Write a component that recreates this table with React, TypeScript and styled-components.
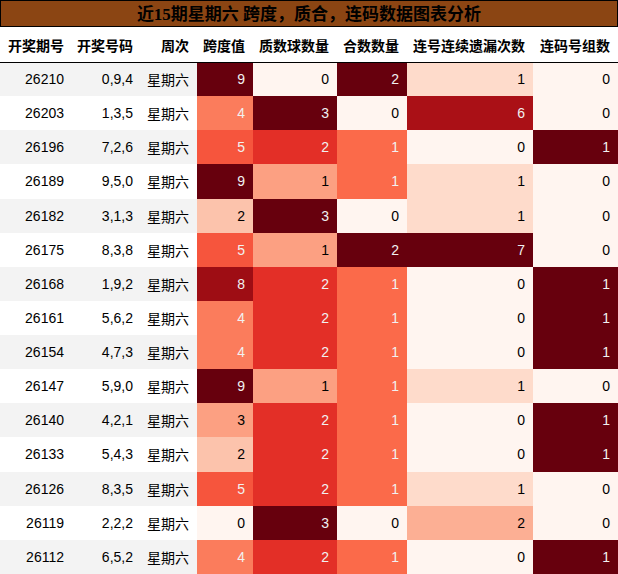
import styled, { createGlobalStyle } from 'styled-components';

const GlobalStyle = createGlobalStyle`
  body {
    margin: 0;
    background: #fff;
  }
`;

// matplotlib "Reds" colormap stops
const REDS = [
  [255, 245, 240],
  [254, 224, 210],
  [252, 187, 161],
  [252, 146, 114],
  [251, 106, 74],
  [239, 59, 44],
  [203, 24, 29],
  [165, 15, 21],
  [103, 0, 13],
];

const reds = (t: number) => {
  const pos = Math.min(Math.max(t, 0), 1) * (REDS.length - 1);
  const i = Math.min(Math.floor(pos), REDS.length - 2);
  const f = pos - i;
  return REDS[i].map((c, k) => Math.round(c + (REDS[i + 1][k] - c) * f));
};

const luminance = (rgb: number[]) => {
  const lin = rgb.map((v) => {
    const c = v / 255;
    return c <= 0.03928 ? c / 12.92 : Math.pow((c + 0.055) / 1.055, 2.4);
  });
  return 0.2126 * lin[0] + 0.7152 * lin[1] + 0.0722 * lin[2];
};

type Row = {
  issue: string;
  nums: string;
  span: number;
  prime: number;
  composite: number;
  miss: number;
  groups: number;
};

const rows: Row[] = [
  { issue: '26210', nums: '0,9,4', span: 9, prime: 0, composite: 2, miss: 1, groups: 0 },
  { issue: '26203', nums: '1,3,5', span: 4, prime: 3, composite: 0, miss: 6, groups: 0 },
  { issue: '26196', nums: '7,2,6', span: 5, prime: 2, composite: 1, miss: 0, groups: 1 },
  { issue: '26189', nums: '9,5,0', span: 9, prime: 1, composite: 1, miss: 1, groups: 0 },
  { issue: '26182', nums: '3,1,3', span: 2, prime: 3, composite: 0, miss: 1, groups: 0 },
  { issue: '26175', nums: '8,3,8', span: 5, prime: 1, composite: 2, miss: 7, groups: 0 },
  { issue: '26168', nums: '1,9,2', span: 8, prime: 2, composite: 1, miss: 0, groups: 1 },
  { issue: '26161', nums: '5,6,2', span: 4, prime: 2, composite: 1, miss: 0, groups: 1 },
  { issue: '26154', nums: '4,7,3', span: 4, prime: 2, composite: 1, miss: 0, groups: 1 },
  { issue: '26147', nums: '5,9,0', span: 9, prime: 1, composite: 1, miss: 1, groups: 0 },
  { issue: '26140', nums: '4,2,1', span: 3, prime: 2, composite: 1, miss: 0, groups: 1 },
  { issue: '26133', nums: '5,4,3', span: 2, prime: 2, composite: 1, miss: 0, groups: 1 },
  { issue: '26126', nums: '8,3,5', span: 5, prime: 2, composite: 1, miss: 1, groups: 0 },
  { issue: '26119', nums: '2,2,2', span: 0, prime: 3, composite: 0, miss: 2, groups: 0 },
  { issue: '26112', nums: '6,5,2', span: 4, prime: 2, composite: 1, miss: 0, groups: 1 },
];

const heatKeys: (keyof Row)[] = ['span', 'prime', 'composite', 'miss', 'groups'];

const columns = [
  { label: '开奖期号', width: 72 },
  { label: '开奖号码', width: 69 },
  { label: '周次', width: 56 },
  { label: '跨度值', width: 56 },
  { label: '质数球数量', width: 84 },
  { label: '合数数量', width: 70 },
  { label: '连号连续遗漏次数', width: 126 },
  { label: '连码号组数', width: 85 },
];

const ranges = heatKeys.map((key) => {
  const values = rows.map((r) => r[key] as number);
  return { min: Math.min(...values), max: Math.max(...values) };
});

const HeatValue = ({ value, col }: { value: number; col: number }) => {
  const { min, max } = ranges[col];
  const rgb = reds(max === min ? 0 : (value - min) / (max - min));
  const dark = luminance(rgb) < 0.408;
  return (
    <HeatCell $bg={`rgb(${rgb.join(',')})`} $dark={dark}>
      {value}
    </HeatCell>
  );
};

const App = () => {
  return (
    <Wrap>
      <GlobalStyle />
      <Title>近15期星期六 跨度，质合，连码数据图表分析</Title>
      <Table>
        <colgroup>
          {columns.map((c) => (
            <col key={c.label} style={{ width: c.width }} />
          ))}
        </colgroup>
        <thead>
          <tr>
            {columns.map((c) => (
              <HeadCell key={c.label}>{c.label}</HeadCell>
            ))}
          </tr>
        </thead>
        <tbody>
          {rows.map((row) => (
            <BodyRow key={row.issue}>
              <Cell>{row.issue}</Cell>
              <Cell>{row.nums}</Cell>
              <Cell>星期六</Cell>
              {heatKeys.map((key, i) => (
                <HeatValue key={key} value={row[key] as number} col={i} />
              ))}
            </BodyRow>
          ))}
        </tbody>
      </Table>
    </Wrap>
  );
};

export default App;

const Wrap = styled.div`
  width: 618px;
  font-family: 'Liberation Sans', 'Noto Sans CJK SC', sans-serif;
  color: #000;
`;

const Title = styled.div`
  box-sizing: border-box;
  height: 27px;
  border: 1px solid #000;
  background: #8b4513;
  display: flex;
  align-items: center;
  justify-content: center;
  font-family: 'Liberation Serif', 'Noto Sans CJK SC', serif;
  font-size: 17px;
  font-weight: 700;
  color: #000;
  line-height: 1;
  padding-top: 1px;
`;

const Table = styled.table`
  width: 618px;
  border-collapse: collapse;
  border-spacing: 0;
  table-layout: fixed;
`;

const HeadCell = styled.th`
  height: 35px;
  padding: 2px 8px 0 0;
  box-sizing: border-box;
  text-align: right;
  font-size: 14px;
  font-weight: 700;
  white-space: nowrap;
  border-bottom: 1px solid #000;
`;

const BodyRow = styled.tr`
  height: 34.13px;

  &:nth-child(odd) {
    background: #f3f3f3;
  }
  &:nth-child(even) {
    background: #fff;
  }
`;

const Cell = styled.td`
  padding: 0 8px 0 0;
  text-align: right;
  font-size: 14px;
  white-space: nowrap;
`;

const HeatCell = styled(Cell)<{ $bg: string; $dark: boolean }>`
  background: ${({ $bg }) => $bg};
  color: ${({ $dark }) => ($dark ? '#f1f1f1' : '#000')};
`;
